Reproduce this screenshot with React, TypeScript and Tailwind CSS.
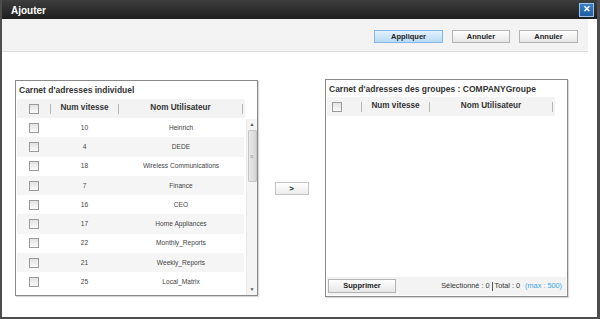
import React from 'react';

const rows = [
  { num: '10', name: 'Heinrich' },
  { num: '4', name: 'DEDE' },
  { num: '18', name: 'Wireless Communications' },
  { num: '7', name: 'Finance' },
  { num: '16', name: 'CEO' },
  { num: '17', name: 'Home Appliances' },
  { num: '22', name: 'Monthly_Reports' },
  { num: '21', name: 'Weekly_Reports' },
  { num: '25', name: 'Local_Matrix' },
];

const Check = () => (
  <span className="block w-[10px] h-[10px] border border-[#9a9a9a] bg-gradient-to-b from-[#e3e3e3] to-[#fafafa]" />
);

const Sep = () => <div className="w-px h-[10px] bg-[#b5b5b5]" />;

const Btn = ({ label, blue, w }: { label: string; blue?: boolean; w: string }) => (
  <button
    className={`${w} h-[13px] flex items-center justify-center text-[7.5px] font-bold text-[#222] border ${
      blue
        ? 'border-[#84b6e6] bg-gradient-to-b from-[#e3f1fd] to-[#b8dbf6]'
        : 'border-[#b3b3b3] bg-gradient-to-b from-white to-[#e6e6e6]'
    }`}
  >
    {label}
  </button>
);

export default function App() {
  return (
    <div
      className="w-[600px] h-[319px] bg-white flex flex-col overflow-hidden border-l-2 border-r-[3px] border-b-2 border-[#4d4d4d]"
      style={{ fontFamily: '"Liberation Sans", Arial, sans-serif' }}
    >
      {/* title bar */}
      <div className="h-[19px] shrink-0 flex items-center justify-between pl-[9px] pr-[2px] bg-gradient-to-b from-[#3e3e3e] to-[#1f1f1f] -ml-[2px] -mr-[3px]">
        <span className="text-white text-[10px] font-bold pt-[2px] pl-[2px]">Ajouter</span>
        <span className="w-[15px] h-[14px] mr-[4px] flex items-center justify-center bg-gradient-to-b from-[#3a7fc4] to-[#1f5d9f] border border-[#9cc3ea] text-white text-[9px] font-bold leading-none">
          ✕
        </span>
      </div>

      {/* toolbar */}
      <div className="h-[33px] shrink-0 mr-[9px] bg-[#f3f3f3] border-b border-[#dcdcdc] flex items-center justify-end gap-[9px] pr-[10px] pt-[3px]">
        <Btn label="Appliquer" blue w="w-[69px]" />
        <Btn label="Annuler" w="w-[58px]" />
        <Btn label="Annuler" w="w-[59px]" />
      </div>

      {/* content */}
      <div className="flex items-start pl-[13px] pt-[28px]">
        {/* left panel */}
        <div className="w-[243px] h-[216px] border border-[#8a8a8a] shadow-[1px_1px_1px_rgba(0,0,0,0.15)] flex flex-col pl-[1px]">
          <div className="h-[18px] shrink-0 flex items-center pl-[2px] pt-[1px] text-[8.5px] font-bold text-[#333]">
            Carnet d'adresses individuel
          </div>
          <div className="w-[228px]">
            <div className="flex items-center h-[19px] bg-[#f3f3f3] text-[8.2px] font-bold text-[#333]">
              <div className="w-[33px] flex justify-center">
                <Check />
              </div>
              <Sep />
              <div className="w-[67px] text-center">Num vitesse</div>
              <Sep />
              <div className="w-[123px] text-center">Nom Utilisateur</div>
              <Sep />
            </div>
          </div>
          <div className="flex flex-1 min-h-0">
            <div className="w-[227px] flex flex-col">
              {rows.map((r, i) => (
                <div
                  key={i}
                  className={`flex items-center h-[19.3px] text-[6.6px] text-[#444] ${
                    i % 2 === 1 ? 'bg-[#f5f5f5]' : 'bg-white'
                  }`}
                >
                  <div className="w-[33px] flex justify-center">
                    <Check />
                  </div>
                  <div className="w-[69px] text-center">{r.num}</div>
                  <div className="w-[124px] text-center">{r.name}</div>
                </div>
              ))}
            </div>
            <div className="ml-auto w-[11px] flex flex-col items-center bg-[#f4f4f4] border-l border-[#e8e8e8] pt-[3px] pb-[3px] mt-[1px]">
              <span className="text-[5px] text-[#555] leading-none">▲</span>
              <div className="w-[9px] h-[52px] mt-[3px] rounded-[1px] border border-[#c6c6c6] bg-gradient-to-r from-[#e9e9e9] to-[#d6d6d6] flex items-center justify-center">
                <span className="text-[5px] text-[#888] leading-none">≡</span>
              </div>
              <span className="mt-auto text-[5px] text-[#555] leading-none">▼</span>
            </div>
          </div>
        </div>

        {/* move button */}
        <div className="w-[67px] self-stretch flex justify-center pt-[102px]">
          <button className="w-[34px] h-[13px] flex items-center justify-center text-[8px] font-bold text-[#222] border border-[#c4c4c4] bg-gradient-to-b from-white to-[#ececec]">
            &gt;
          </button>
        </div>

        {/* right panel */}
        <div className="-mt-[1px] w-[243px] h-[218px] border border-[#8a8a8a] shadow-[1px_1px_1px_rgba(0,0,0,0.15)] flex flex-col pl-[1px]">
          <div className="h-[17px] shrink-0 flex items-center pl-[2px] pt-[1px] text-[8.5px] font-bold text-[#333]">
            Carnet d'adresses des groupes : COMPANYGroupe
          </div>
          <div className="w-[228px]">
            <div className="flex items-center h-[19px] bg-[#f3f3f3] text-[8.2px] font-bold text-[#333]">
              <div className="w-[17px] flex justify-center pl-[2px]">
                <Check />
              </div>
              <div className="w-[17px]" />
              <Sep />
              <div className="w-[67px] text-center">Num vitesse</div>
              <Sep />
              <div className="w-[122px] text-center">Nom Utilisateur</div>
              <Sep />
            </div>
          </div>
          <div className="flex-1" />
          <div className="h-[18px] mr-[1px] mb-[1px] bg-[#f3f3f3] flex items-center pl-[1px] pr-[4px]">
            <button className="w-[68px] h-[14px] flex items-center justify-center text-[7.5px] font-bold text-[#222] border border-[#b3b3b3] bg-gradient-to-b from-white to-[#e6e6e6]">
              Supprimer
            </button>
            <div className="ml-auto flex items-center text-[7.3px] text-[#333]">
              <span>Sélectionné : 0</span>
              <span className="mx-[2px] w-px h-[9px] bg-[#555]" />
              <span>Total : 0</span>
              <span className="ml-[5px] text-[#3ba3e6]">(max : 500)</span>
            </div>
          </div>
        </div>
      </div>
    </div>
  );
}
